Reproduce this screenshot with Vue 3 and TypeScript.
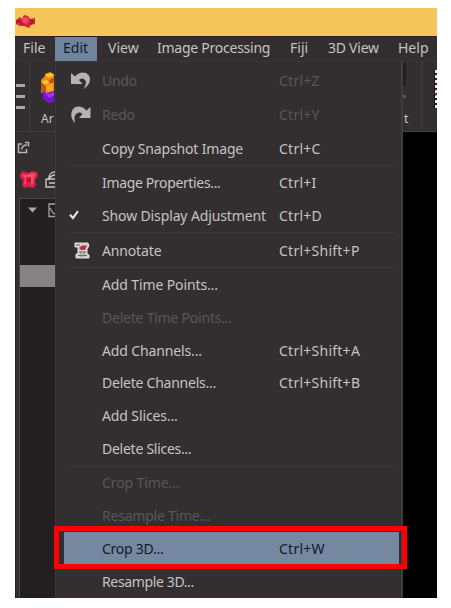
<script setup lang="ts">
interface Entry {
  label: string
  /** letter-spacing in px */
  track: number
  keys?: string
  icon?: 'undo' | 'redo' | 'check' | 'note'
  disabled?: boolean
  active?: boolean
  divider?: boolean
  tall?: boolean
}

const menus: { label: string; cls: string }[] = [
  { label: 'File', cls: 'file' },
  { label: 'Edit', cls: 'edit' },
  { label: 'View', cls: 'view' },
  { label: 'Image Processing', cls: 'proc' },
  { label: 'Fiji', cls: 'fiji' },
  { label: '3D View', cls: 'three' },
  { label: 'Help', cls: 'help' },
]

const entries: Entry[] = [
  { label: 'Undo', track: -0.35, keys: 'Ctrl+Z', icon: 'undo', disabled: true, tall: true },
  { label: 'Redo', track: -0.2, keys: 'Ctrl+Y', icon: 'redo', disabled: true, tall: true },
  { label: 'Copy Snapshot Image', track: -0.15, keys: 'Ctrl+C', divider: true },
  { label: 'Image Properties...', track: -0.35, keys: 'Ctrl+I' },
  { label: 'Show Display Adjustment', track: -0.13, keys: 'Ctrl+D', icon: 'check', divider: true },
  { label: 'Annotate', track: -0.15, keys: 'Ctrl+Shift+P', icon: 'note', tall: true, divider: true },
  { label: 'Add Time Points...', track: -0.12 },
  { label: 'Delete Time Points...', track: -0.22, disabled: true },
  { label: 'Add Channels...', track: -0.13, keys: 'Ctrl+Shift+A' },
  { label: 'Delete Channels...', track: -0.24, keys: 'Ctrl+Shift+B' },
  { label: 'Add Slices...', track: -0.12 },
  { label: 'Delete Slices...', track: -0.26, divider: true },
  { label: 'Crop Time...', track: -0.1, disabled: true },
  { label: 'Resample Time...', track: -0.22, disabled: true },
  { label: 'Crop 3D...', track: -0.26, keys: 'Ctrl+W', active: true },
  { label: 'Resample 3D...', track: -0.36 },
]
</script>

<template>
  <div class="page">
    <div class="window">
      <header class="titlebar">
        <svg width="21" height="17" viewBox="0 0 21 17">
          <path d="M1 7L5 4L7 6L9 2L13 3L15 6L20 5V11L16 12L14 15L9 13L5 13L1 11Z" fill="#d92439" />
          <path d="M8 5L12 4L14 8L11 11L7 9Z" fill="#f04b60" />
          <path d="M1 9L5 8L8 12M15 7L18 8L16 11" fill="none" stroke="#a3142b" stroke-width="1.5" />
        </svg>
      </header>
      <nav class="menubar">
        <span v-for="m in menus" :key="m.label" class="menu" :class="m.cls">{{ m.label }}</span>
      </nav>
      <div class="body">
        <aside class="left">
          <div class="tools">
            <div class="grip"><i></i><i></i><i></i></div>
            <div class="arivis">
              <svg width="13" height="32" viewBox="0 0 13 32">
                <path d="M0 8L4 4V2L9 0L13 2V29L8 31L2 26V22L0 20Z" fill="#ee8b12" />
                <path d="M4 3L9 1L13 3L8 6ZM1 9L6 8L8 11L3 13Z" fill="#ffc437" />
                <path d="M0 10L5 14V21L0 18ZM8 8L13 6V10L9 12Z" fill="#bd550f" />
                <path d="M5 14L12 11V18L6 20Z" fill="#faa31e" />
                <path d="M1 19L6 21L13 19V29L8 31L2 26Z" fill="#7411dc" />
                <path d="M3 20L8 22L13 20V24L8 26Z" fill="#9e38ee" />
              </svg>
              <span>Ar</span>
            </div>
          </div>
          <div class="dock">
            <svg width="13" height="13" viewBox="0 0 13 13" fill="none" stroke="#b5b2b3" stroke-width="1.5">
              <path d="M5 3H1.5V11.5H9.5V8M4.5 8.5C5 5.5 7 4 10 4M8 1.5H11.5V5.5" />
            </svg>
          </div>
          <div class="objects">
            <svg class="flower" width="18" height="19" viewBox="0 0 18 19">
              <path d="M0 4L3 1L8 3L12 1L17 2L18 6L15 10L16 15L13 18L8 17L4 18L2 15L3 10L0 8Z" fill="#dc1f45" />
              <path d="M2 4L7 5L12 3L16 4L14 8L13 14L11 15L11 7H6V14L4 14L5 9Z" fill="#fb4b6b" />
              <path d="M7 8H11V12H7Z" fill="#b51435" />
            </svg>
            <svg class="basket" width="10" height="19" viewBox="0 0 10 19" fill="none" stroke="#c9c6c7" stroke-width="1.4">
              <path d="M10 2C6 2 4 5 4 8M10 5C7 5 5 7 3 10M1 9H10M1 9V17H10M4 13H10" />
            </svg>
          </div>
          <div class="tree">
            <div class="root">
              <svg class="arrow" width="9" height="6" viewBox="0 0 9 6"><path d="M0 .5H9L4.5 5.5Z" fill="#aaa8a9" /></svg>
              <svg class="box" width="7" height="15" viewBox="0 0 7 15" fill="none" stroke="#a6a4a5" stroke-width="1.3">
                <path d="M7 1H1V13.5H7M2 5L5 10L7 11" />
              </svg>
            </div>
            <div class="picked"></div>
          </div>
        </aside>

        <section class="drop">
          <div class="rail"></div>
          <div class="list">
            <div
              v-for="e in entries"
              :key="e.label"
              class="row"
              :class="{ disabled: e.disabled, active: e.active, divider: e.divider, tall: e.tall }"
            >
              <span class="icon">
                <svg v-if="e.icon === 'undo'" class="turn" width="20" height="17" viewBox="0 0 20 17">
                  <path d="M0 1L4 4.5C8 0 14 -1 17.5 3C21 8 18 14 12.5 17C15 13 16 9.5 13.5 7.5C11.5 5.8 9.5 6.5 8 8L11.5 12H0Z" fill="#b5b2b3" />
                </svg>
                <svg v-else-if="e.icon === 'redo'" class="turn" width="20" height="17" viewBox="0 0 20 17">
                  <path d="M19.5 1L15.5 4.5C11.5 0 5.5 -1 2 3C-1 8 0 13.5 4 17C3 13 3.2 9.5 5.8 7.5C8 5.8 10 6.5 11.5 8L8 12H19.5Z" fill="#b5b2b3" />
                </svg>
                <svg v-else-if="e.icon === 'check'" class="check" width="10" height="10" viewBox="0 0 10 10">
                  <path d="M1 4.8L4 8L9 1.2" fill="none" stroke="#e2e0e1" stroke-width="2.2" />
                </svg>
                <svg v-else-if="e.icon === 'note'" class="note" width="16" height="17" viewBox="0 0 16 17">
                  <path d="M1 1H14L15 4L13 7V12L15 13V16H2V12H4V5H1Z" fill="#cdd3cd" stroke="#e0dcdc" />
                  <path d="M2 3H6M5 10H12M4 13.5H13" stroke="#52725f" stroke-width="1.2" />
                  <path d="M5 6L8 3.5H13L11 8H7Z" fill="#c52b42" />
                  <path d="M7 10V15M10 10V15" stroke="#758178" />
                </svg>
              </span>
              <span class="label" :style="{ letterSpacing: e.track + 'px' }">{{ e.label }}</span>
              <span class="keys">{{ e.keys }}</span>
            </div>
          </div>
          <div class="edge"></div>
        </section>

        <aside class="right">
          <div class="tools">
            <div class="cut"><b></b><span>t</span></div>
            <div class="film"><i></i></div>
          </div>
          <div class="canvas"></div>
        </aside>
      </div>
    </div>
    <div class="callout"></div>
  </div>
</template>

<style>
body {
  margin: 0;
  background: #fff;
}
</style>

<style scoped>
.page {
  position: relative;
  box-sizing: border-box;
  width: 451px;
  height: 608px;
  padding: 8px 14px 10px 15px;
  overflow: hidden;
  font-family: "Noto Sans", "Open Sans", sans-serif;
  font-size: 14px;
  color: #c6c3c4;
}
.window {
  display: flex;
  flex-direction: column;
  width: 422px;
  height: 589.5px;
  overflow: hidden;
  background: #332f30;
}
.titlebar {
  height: 28px;
  background: #f5c65a;
  flex: none;
}
.titlebar svg {
  display: block;
  margin-top: 5px;
}
.menubar {
  display: grid;
  grid-template-columns: 40px 42px 52px 132px 38px 67px 51px;
  height: 26px;
  box-sizing: border-box;
  padding-bottom: 1px;
  border-top: 1px solid #252021;
  border-bottom: 1px solid #393536;
  flex: none;
}
.menu {
  white-space: nowrap;
  line-height: 22px;
  padding-left: 8px;
}
.edit {
  height: 24px;
  background: #71849d;
  color: #111b2c;
}
.view { padding-left: 11px; }
.proc {
  padding-left: 8px;
  letter-spacing: -0.25px;
}
.fiji { padding-left: 9px; }
.three {
  padding-left: 9px;
  letter-spacing: -0.25px;
}
.help { padding-left: 12px; }
.body {
  display: flex;
  flex: 1;
  min-height: 0;
}
.left {
  display: flex;
  flex-direction: column;
  width: 40px;
  border-left: 1px solid #242122;
  box-sizing: border-box;
}
.tools {
  display: flex;
  box-sizing: border-box;
  height: 70px;
  flex: none;
  border-bottom: 1px solid #413d3e;
}
.grip {
  display: flex;
  flex-direction: column;
  gap: 8px;
  width: 13px;
  padding-top: 22px;
  border-right: 1px solid #3d393a;
}
.grip i {
  width: 9px;
  height: 3px;
  background: #aba8a9;
}
.arivis {
  display: flex;
  flex-direction: column;
  padding: 10px 0 0 11px;
  font-size: 12px;
  line-height: 15px;
}
.arivis span { margin-top: 7px; }
.dock {
  height: 29px;
  padding: 7px 0 0 1px;
  box-sizing: border-box;
}
.objects {
  display: flex;
  gap: 7px;
  height: 37px;
  padding: 9px 0 0 4px;
  box-sizing: border-box;
}
.tree {
  flex: 1;
  margin-left: 3px;
  border-top: 1px solid #494546;
  border-left: 1px solid #494546;
  background: #231f20;
}
.root {
  display: flex;
  gap: 11px;
  height: 66px;
  padding: 4px 0 0 8px;
  box-sizing: border-box;
}
.arrow { margin-top: 4px; }
.picked {
  height: 22px;
  background: #858384;
}
.drop {
  display: flex;
  width: 348px;
  border-left: 1px solid #3c3839;
  box-sizing: border-box;
}
.rail { width: 8px; }
.list {
  width: 335px;
  padding-top: 2px;
  box-sizing: border-box;
}
.row {
  display: flex;
  align-items: center;
  box-sizing: border-box;
  height: 32.85px;
  white-space: nowrap;
}
.row.tall { height: 33.8px; }
.row.divider {
  height: 34.3px;
  background: linear-gradient(#3d393a, #3d393a) 5px 100% / 325px 1px no-repeat;
  padding-bottom: 1px;
}
.row.tall.divider { height: 35px; }
.icon {
  display: flex;
  width: 38px;
  flex: none;
}
.turn { margin-left: 7px; }
.check { margin-left: 5px; }
.note { margin-left: 10px; }
.label {
  width: 177px;
  flex: none;
}
.keys { letter-spacing: 0.25px; }
.disabled { color: #5a5657; }
.active {
  background: #75889f;
  color: #111a2a;
}
.edge {
  width: 2px;
  margin-left: auto;
  background: #403c3d;
}
.right {
  display: flex;
  flex-direction: column;
  width: 34px;
}
.cut {
  display: flex;
  flex-direction: column;
  width: 18px;
  border-right: 2px solid #3b3738;
  font-size: 12px;
  line-height: 15px;
}
.cut b {
  width: 3px;
  height: 49px;
  background: linear-gradient(#231f20 0 24px, #332f30 24px 33px, #5b5758 33px 36px, #332f30 36px);
}
.cut span { padding-left: 1px; }
.film {
  display: flex;
  width: 14px;
  justify-content: flex-end;
}
.film i {
  width: 2px;
  height: 38px;
  margin-top: 8px;
  background:
    linear-gradient(#c23a3a, #c23a3a) 0 23px / 1px 3px no-repeat,
    repeating-linear-gradient(#f1eeee 0 3px, #252122 3px 5px);
  border-left: 1px solid #161314;
}
.canvas {
  flex: 1;
  background: #000;
}
.callout {
  position: absolute;
  left: 54px;
  top: 526px;
  width: 353px;
  height: 43px;
  box-sizing: border-box;
  border: 5px solid #fe0000;
}
</style>
